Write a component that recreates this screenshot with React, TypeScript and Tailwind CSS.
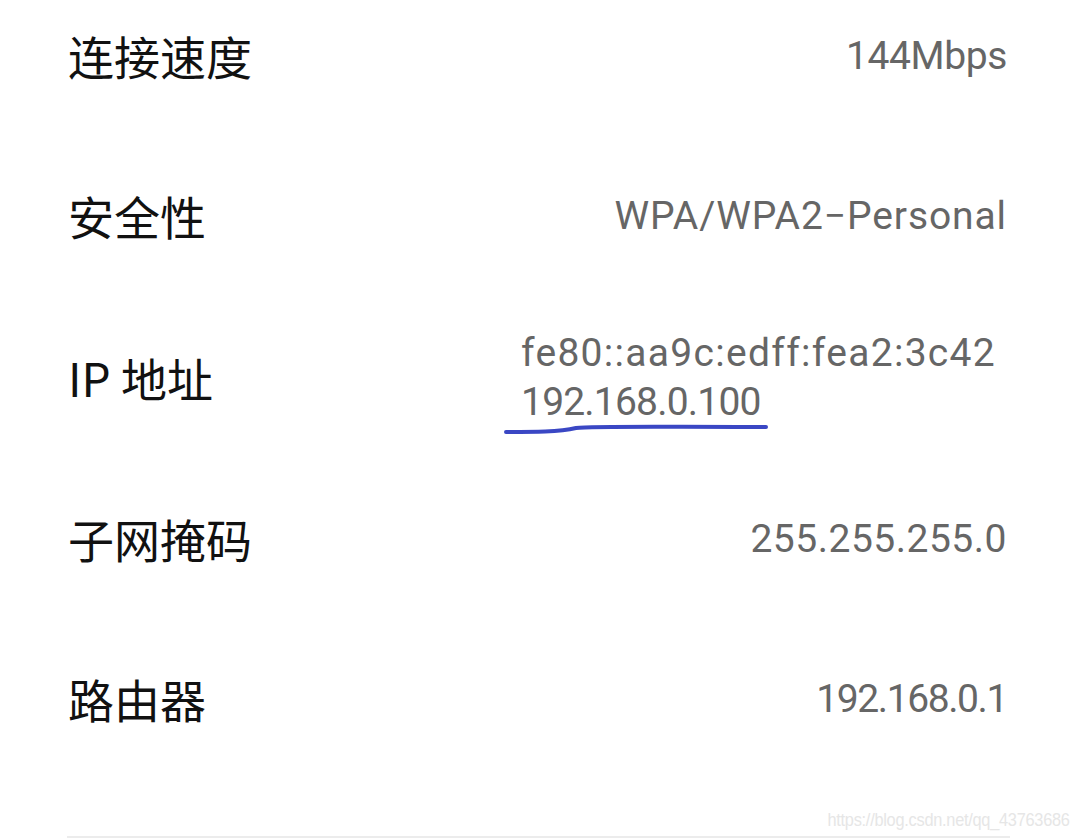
import React from "react";

function Row({ label, children, tracking }: { label: string; children: React.ReactNode; tracking: string }) {
  return (
    <div className="flex items-center justify-between pl-[68px] pr-[73px] h-[160px]">
      <div className="text-[46px] leading-none text-[#111111] font-['Noto_Sans_CJK_SC',sans-serif]">{label}</div>
      <div className={`text-[39px] leading-none text-[#666666] font-['Roboto',sans-serif] pt-[2px] ${tracking}`}>{children}</div>
    </div>
  );
}

export default function App() {
  return (
    <div className="relative w-[1080px] h-[840px] overflow-hidden bg-white">
      <div className="flex flex-col -mt-[25px]">
        <Row label="连接速度" tracking="tracking-[-0.4px]">144Mbps</Row>
        <Row label="安全性" tracking="tracking-[0.9px]">WPA/WPA2−Personal</Row>
        <div className="flex items-center justify-between pl-[68px] pr-[73px] h-[163px]">
          <div className="text-[46px] leading-none text-[#111111] font-['Noto_Sans_CJK_SC',sans-serif]">IP 地址</div>
          <div className="relative mr-[11px] pt-[2px] text-left text-[39px] leading-[49px] text-[#666666] font-['Roboto',sans-serif]">
            <div className="tracking-[1.3px]">fe80::aa9c:edff:fea2:3c42</div>
            <div className="tracking-[-0.8px]">192.168.0.100</div>
            <svg
              className="absolute left-[-17px] top-[95px]"
              width="268"
              height="14"
              viewBox="0 0 268 14"
              fill="none"
            >
              <path
                d="M2 10 C 30 10, 55 10, 72 6 C 90 4, 150 5, 262 5"
                stroke="#3a47c4"
                strokeWidth="4"
                strokeLinecap="round"
              />
            </svg>
          </div>
        </div>
        <Row label="子网掩码" tracking="tracking-[0.5px]">255.255.255.0</Row>
        <Row label="路由器" tracking="tracking-[-1.4px]">192.168.0.1</Row>
        <div className="mt-[58px] ml-[67px] mr-[70px] h-[2px] bg-[#ececec]" />
      </div>
      <div className="absolute right-[10px] top-[810px] origin-right scale-x-[0.86] text-[19px] leading-none tracking-[-0.3px] text-[#e6e6e6] font-['Liberation_Sans',sans-serif]">
        https://blog.csdn.net/qq_43763686
      </div>
    </div>
  );
}
